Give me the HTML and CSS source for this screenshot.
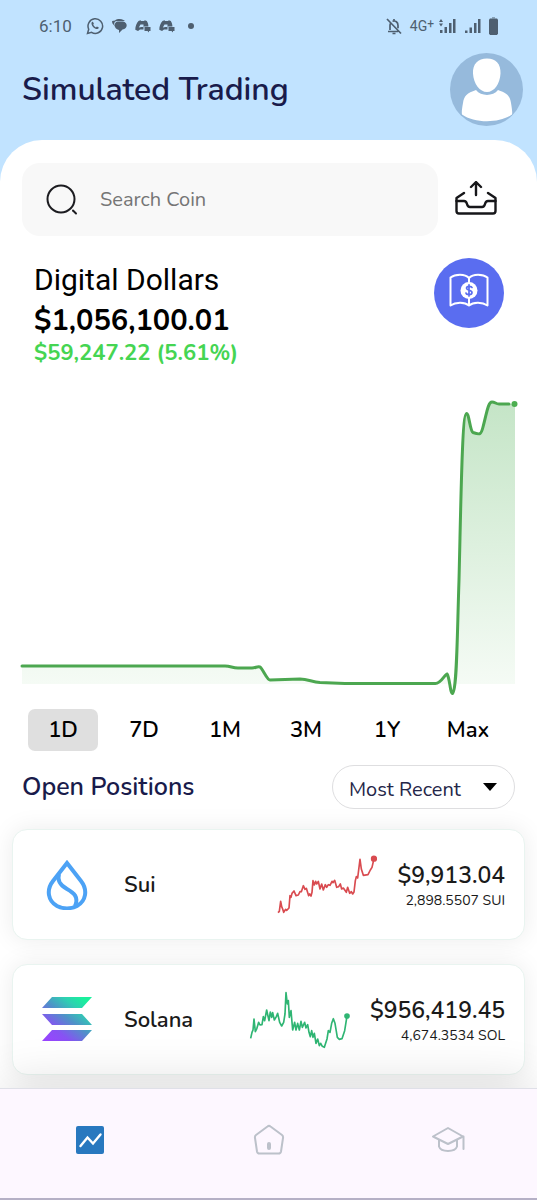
FILE: index.html
```html
<!DOCTYPE html>
<html lang="en">
<head>
<meta charset="utf-8">
<meta name="viewport" content="width=device-width, initial-scale=1">
<title>Simulated Trading</title>
<link rel="stylesheet" href="styles.css">
</head>
<body>
<div class="app">
  <div class="status">
    <div class="status-group">
      <span class="clock">6:10</span>
      <svg class="status-icon" viewBox="0 0 18 18" width="18" height="18" fill="none" stroke="currentColor" stroke-width="1.5"><path d="M1.5 16.5l1.2-4.3A7.3 7.3 0 1 1 5.6 15.400z"/><path d="M5.800 5.300c.6-.7 1.200-.5 1.500.2l.6 1.300-.7 1c.6 1.200 1.500 2 2.700 2.600l1-1 1.600.8c.4.3.2 1.100-.5 1.600-1.200.8-3.200-.1-4.700-1.600-1.500-1.500-2.400-3.700-1.500-4.900z" fill="currentColor" stroke="none"/></svg>
      <svg class="status-icon" viewBox="0 0 15 14" width="15" height="14" fill="currentColor"><path d="M3 1.500C5-.2 9-.4 11.500 1L13 2H5C3 2 2 3.500 2.200 5.500L3 7.500.5 4.500C0 3.500 0 2.500.2 2z"/><path d="M5.500 2.600h5.500c5 1 5 7-.5 8L7 14v-3C2 10 1 4 5.500 2.600z"/></svg>
      <svg class="status-icon" viewBox="0 0 16 13" width="16" height="13"><path d="M3.500 1l2-.8.6.8h3l.7-.8 2 .8c1 1.500 1.600 3.500 1.600 5.500H8.500v3H5L3 11 .3 9.700C.2 6.500 1.500 3 3.500 1z" fill="currentColor"/><path d="M3.800 7.500L5.500 4.500h3v2.500H6.500z" fill="#c1e3ff"/><path d="M9.500 7h6V11H14v1.500L12.500 11h-3z" fill="currentColor"/></svg>
      <svg class="status-icon" viewBox="0 0 16 13" width="16" height="13"><path d="M3.500 1l2-.8.6.8h3l.7-.8 2 .8c1 1.500 1.600 3.500 1.600 5.500H8.500v3H5L3 11 .3 9.700C.2 6.500 1.500 3 3.500 1z" fill="currentColor"/><path d="M3.800 7.500L5.500 4.500h3v2.500H6.500z" fill="#c1e3ff"/><path d="M9.500 7h6V11H14v1.500L12.500 11h-3z" fill="currentColor"/></svg>
      <svg class="status-icon" viewBox="0 0 16 6" width="16" height="6"><circle cx="8" cy="3" r="3" fill="currentColor"/></svg>
    </div>
    <div class="status-group status-right">
      <svg viewBox="0 0 16 17" width="16" height="17" fill="none" stroke="currentColor" stroke-width="1.700"><path d="M1 1l14 14.500M2 13.500h10M4 12V7.500c0-1 .2-2 .8-2.700M6.500 3.300C9.500 2.200 12 4.300 12 7.500v2.700M8 1v2M6.500 15.500h3"/></svg>
      <span class="network">4G<sup>+</sup></span>
      <svg viewBox="0 0 17 16" width="17" height="16" fill="currentColor"><path d="M0 4l2-3 2 3zM0 5.500h4l-2 3zM1 12h2.500v3H1zM5.500 9H8v6H5.500zM10 5h2.500v10H10zM14 1h2.500v14H14z"/></svg>
      <svg viewBox="0 0 17 16" width="17" height="16" fill="currentColor"><path d="M1 12.500h2.500V15H1zM5.500 9.500H8V15H5.500zM10 5h2.500v10H10zM14 1h2.500v14H14z"/></svg>
      <svg viewBox="0 0 9 18" width="9" height="18" fill="currentColor"><path d="M3 0h3v1.500H3z" opacity=".5"/><path d="M1 1.500h7l1 1v14L8 18H1l-1-1.500v-14z"/></svg>
    </div>
  </div>

  <header class="header">
    <h1 class="title">Simulated Trading</h1>
    <button class="avatar" type="button" aria-label="Profile">
      <svg viewBox="0 0 73 73"><circle cx="36.500" cy="36.500" r="36.500" fill="#96badc"/><path d="M37 5.500c9 0 14 5.500 13.500 15C50 31 44 39 37 39s-13.500-8-14-18.500C22.500 11 28 5.500 37 5.500z" fill="#fff"/><path d="M26 37c5 6.500 17 6.500 22 0 9 3 12 6 13 13 1 6 1.500 10 1 11.500-12 9-38 9-50 0-.5-2 0-6 1-11.500 1-7 4-10 13-13z" fill="#fff"/></svg>
    </button>
  </header>

  <main class="panel">
    <div class="search-row">
      <label class="search">
        <svg viewBox="0 0 32 32" width="32" height="32" fill="none" stroke="#1c1c20" stroke-width="2" stroke-linecap="round"><circle cx="15" cy="15" r="13.500"/><path d="M27 26.500l3 3"/></svg>
        <input class="search-input" type="text" placeholder="Search Coin" aria-label="Search Coin">
      </label>
      <button class="icon-button" type="button" aria-label="Export">
        <svg viewBox="0 0 42 34" width="42" height="34" fill="none" stroke="#17171a" stroke-width="2.400" stroke-linecap="round" stroke-linejoin="round"><path d="M21 14V2M16 6l5-5 5 5M9 12l-7.500 5v13c0 1.500 1 2.500 2.500 2.500h34c1.500 0 2.500-1 2.500-2.500V17L33 12"/><path d="M1.500 20H9c2 0 2.500 1 3 3s1.500 3 3 3h12c1.500 0 2.500-1 3-3s1-3 3-3h7.500"/></svg>
      </button>
    </div>

    <section class="summary">
      <div class="balance">
        <h2 class="balance-label">Digital Dollars</h2>
        <p class="balance-value">$1,056,100.01</p>
        <p class="balance-change">$59,247.22 (5.61%)</p>
      </div>
      <button class="learn" type="button" aria-label="Money guide">
        <svg viewBox="0 0 70 70" fill="none" stroke="#fff" stroke-width="2" stroke-linecap="round" stroke-linejoin="round"><path d="M35 20c-4-4.500-14-4-18.500-.5V47.500c5-3.500 14-4 18.500 0 4.500-4 13.500-3.500 18.500 0V19.500C49 16 39 15.500 35 20v4M35 39v8"/><circle cx="35" cy="32.500" r="8.500" fill="#fff" stroke="none"/><path d="M38 29.500c-.5-1.500-5.500-2-5.500.8 0 2.400 5.500 1.500 5.500 4.200 0 2.800-5.500 2.500-6 .5M35 26.800V38" stroke="#5a6df0" stroke-width="1.700"/></svg>
      </button>
    </section>

    <svg class="chart" viewBox="22 395 493 300" role="img" aria-label="Balance over one day">
      <defs><linearGradient id="area" x1="0" y1="404" x2="0" y2="684" gradientUnits="userSpaceOnUse"><stop offset="0" stop-color="#c5e5c7"/><stop offset="1" stop-color="#f5fbf5"/></linearGradient></defs>
      <path fill="url(#area)" d="M22 684V666H225C231 666 232 668 238 668H252C256 668 257 666 260 667C263 669 267 680 270 680L300 679C308 679 312 682 320 682L345 684H438C441 684 445 674 447 674L450 684H456C458 640 458 610 459 580C461 500 462 413 466 413C469 413 470 432 473 432C480 435 481 435 483 427C487 412 488 402 492 402C495 402 496 404 499 404H515V684z"/>
      <path class="chart-line" d="M22 666H225C231 666 232 668 238 668H252C256 668 257 666 260 667C263 669 267 680 270 680L300 679C308 679 312 682 320 682.500L345 683.500H435C441 684 445 674 447 674C450 678 450 693.500 452.500 693.500C457 690 457 640 459 580C461 500 462 413.500 466.500 413.500C469 413 470 431 473 432.500C480 435 481 435 483 427C487 412 488 402 492 402C495 402 496 404 499 404H509"/>
      <circle cx="514.500" cy="404" r="3" fill="#4caf50"/>
    </svg>

    <div class="ranges" role="group" aria-label="Time range">
      <button class="range range-active" type="button" aria-pressed="true">1D</button>
      <button class="range" type="button">7D</button>
      <button class="range" type="button">1M</button>
      <button class="range" type="button">3M</button>
      <button class="range" type="button">1Y</button>
      <button class="range" type="button">Max</button>
    </div>

    <div class="positions-head">
      <h2 class="positions-title">Open Positions</h2>
      <div class="sort">
        <select class="sort-select" aria-label="Sort positions"><option>Most Recent</option></select>
        <svg class="sort-arrow" viewBox="0 0 14 8" width="14" height="8"><path d="M0 0h14L7 8z"/></svg>
      </div>
    </div>

    <ul class="positions">
      <li class="card">
        <svg class="coin" viewBox="0 0 50 50" fill="none" stroke="#4ca2f5" stroke-width="4"><path d="M25 3L11 21C4 30 6 41 15 46c6 3 14 3 20 0 9-5 11-16 4-25z"/><path d="M17 14c-2 7 1 11 8 15s12 8 8 17"/></svg>
        <h3 class="coin-name">Sui</h3>
        <svg class="spark" viewBox="105 40 306 186" stroke="#d94b50"><path d="M114 216L118 212 122 182 125 198 128 205 131 215 137 206 140 209 147 202 150 165 153 170 156 158 162 151 168 165 175 163 180 153 184 153 190 135 195 146 199 143 206 165 209 160 213 166 216 155 219 120 223 133 227 122 230 130 235 122 240 145 245 130 250 148 256 132 260 140 265 132 270 134 276 122 279 126 284 119 290 140 296 138 301 130 305 145 310 142 319 155 323 140 329 158 334 153 338 160 342 154 346 120 349 108 353 112 360 56 364 85 370 104 384 102 391 88 396 80 402 54"/><circle cx="402" cy="54" r="7" fill="#d94b50"/></svg>
        <div class="holding"><span class="holding-value">$9,913.04</span><span class="holding-amount">2,898.5507 SUI</span></div>
      </li>
      <li class="card">
        <svg class="coin" viewBox="0 0 50 50"><defs><linearGradient id="sol" x1="8" y1="48" x2="42" y2="4" gradientUnits="userSpaceOnUse"><stop offset="0" stop-color="#9945ff"/><stop offset=".25" stop-color="#8752f3"/><stop offset=".55" stop-color="#4f92c8"/><stop offset=".8" stop-color="#2ed0b2"/><stop offset="1" stop-color="#19f09c"/></linearGradient></defs><path fill="url(#sol)" d="M10 2h40l-10 11H0zM0 19h40l10 11H10zM10 35h40L40 46H0z"/></svg>
        <h3 class="coin-name">Solana</h3>
        <svg class="spark" viewBox="52 55 306 186" stroke="#2fb573"><path d="M60 203L64 185 67 178 70 145 74 183 78 175 84 155 88 163 94 162 98 138 102 150 108 118 115 150 119 124 123 140 126 126 131 148 137 138 141 128 147 155 153 166 159 155 163 130 166 66 170 100 173 90 176 140 181 120 186 178 192 155 196 178 201 158 206 178 211 152 215 170 222 155 226 172 231 162 235 185 239 198 243 180 247 200 251 188 256 218 261 205 266 225 270 218 275 227 281 230 289 205 293 180 298 185 303 158 308 144 313 158 320 200 326 206 334 204 342 180 349 136"/><circle cx="349" cy="136" r="6" fill="#2fb573"/></svg>
        <div class="holding"><span class="holding-value">$956,419.45</span><span class="holding-amount">4,674.3534 SOL</span></div>
      </li>
    </ul>
  </main>

  <nav class="nav" aria-label="Main">
    <a class="nav-link" href="#trading" aria-label="Trading" aria-current="page"><svg viewBox="0 0 36 36" width="36" height="36"><rect x="4" y="4" width="28" height="28" rx="2" fill="#2878bf"/><path d="M8.500 24l7-8.500 5.500 6 7.500-9" fill="none" stroke="#fff" stroke-width="2.400" stroke-linecap="round"/></svg></a>
    <a class="nav-link" href="#home" aria-label="Home"><svg viewBox="0 0 36 36" width="36" height="36" fill="none" stroke="#bcc1ca" stroke-width="2" stroke-linejoin="round"><path d="M16.500 4.500L5 13c-1 .8-1.200 2-1 3l2 13.500c.3 1.500 1 2 2.500 2h19c1.500 0 2.200-.5 2.500-2L32 16c.2-1 0-2.200-1-3L19.500 4.500c-1-.8-2-.8-3 0z"/><rect x="17" y="21" width="2" height="6" rx="1" fill="#bcc1ca"/></svg></a>
    <a class="nav-link" href="#learn" aria-label="Learn"><svg viewBox="0 0 36 36" width="36" height="36" fill="none" stroke="#bcc1ca" stroke-width="2" stroke-linejoin="round" stroke-linecap="round"><path d="M3 14.500L18 6l15 8.500L18 22z"/><path d="M9 18v6.500c2 6 16 6 18 0V18M33.500 14.500V27"/></svg></a>
  </nav>
</div>
</body>
</html>
```

FILE: styles.css
```css
* {
  box-sizing: border-box;
}

body {
  margin: 0;
  font-family: Nunito, Lato, sans-serif;
  color: #000;
  background: #fff;
}

h1, h2, h3, p, ul {
  margin: 0;
  padding: 0;
}

button {
  padding: 0;
  border: 0;
  background: none;
  font: inherit;
  color: inherit;
}

svg {
  display: block;
  flex: none;
}

.app {
  display: flex;
  flex-direction: column;
  min-height: 100vh;
  background: #c1e3ff;
}

.status {
  display: flex;
  justify-content: space-between;
  align-items: center;
  height: 52px;
  padding: 0 39px;
  color: #4e5f70;
  font-family: Roboto, sans-serif;
}

.status-group {
  display: flex;
  align-items: center;
  gap: 8px;
}

.clock {
  margin-right: 6px;
  font-size: 17px;
}

.network {
  font-size: 14px;
}

.network sup {
  font-size: 12px;
  line-height: 1;
  vertical-align: 3px;
}

.status-right .network {
  margin-right: -3px;
}

.header {
  display: flex;
  justify-content: space-between;
  align-items: center;
  padding: 1px 14px 14px 22px;
}

.title {
  padding-top: 1px;
  font-size: 32px;
  font-weight: 600;
  line-height: 40px;
  color: #191b4b;
}

.avatar {
  width: 73px;
  height: 73px;
}

.panel {
  flex: 1;
  padding: 23px 0 13px;
  border-radius: 42px 42px 0 0;
  background: #fff;
}

.search-row {
  display: flex;
  align-items: center;
  gap: 17px;
  padding: 0 40px 0 22px;
}

.icon-button {
  padding-bottom: 4px;
}

.search {
  display: flex;
  flex: 1;
  align-items: center;
  gap: 22px;
  height: 73px;
  padding: 0 24px;
  border-radius: 18px;
  background: #f8f8f8;
}

.search-input {
  flex: 1;
  min-width: 0;
  padding: 0;
  border: 0;
  outline: 0;
  background: none;
  font: inherit;
  font-size: 20px;
}

.search-input::placeholder {
  color: #757575;
  opacity: 1;
}

.summary {
  display: flex;
  justify-content: space-between;
  align-items: flex-start;
  padding: 22px 33px 0 34px;
}

.balance {
  padding-top: 2px;
}

.balance-label {
  font-family: Roboto, sans-serif;
  font-size: 30px;
  font-weight: 400;
  line-height: 40px;
}

.balance-value {
  padding-top: 1px;
  font-size: 29px;
  font-weight: 700;
  line-height: 40px;
}

.balance-change {
  font-size: 22px;
  font-weight: 700;
  line-height: 24px;
  color: #45d552;
}

.learn {
  width: 70px;
  height: 70px;
  border-radius: 50%;
  background: #5a6df0;
}

.chart {
  width: calc(100% - 44px);
  margin: 30px 22px 0;
  overflow: visible;
}

.chart-line {
  fill: none;
  stroke: #4ca750;
  stroke-width: 3;
  stroke-linecap: round;
}

.ranges {
  display: grid;
  grid-template-columns: repeat(6, 1fr);
  gap: 11px;
  padding: 14px 34px 0 28px;
}

.range {
  height: 42px;
  border-radius: 7px;
  font-size: 22px;
  font-weight: 600;
}

.range-active {
  background: #dfdfdf;
}

.positions-head {
  display: flex;
  justify-content: space-between;
  align-items: center;
  padding: 14px 22px 0;
}

.positions-title {
  font-size: 25px;
  font-weight: 600;
  color: #191b4b;
}

.sort {
  display: grid;
  align-items: center;
  width: 183px;
}

.sort-select,
.sort-arrow {
  grid-area: 1 / 1;
}

.sort-select {
  appearance: none;
  width: 100%;
  height: 44px;
  padding: 5px 40px 0 16px;
  border: 1px solid #dedee0;
  border-radius: 22px;
  background: #fff;
  font: inherit;
  font-size: 20px;
  color: #242648;
}

.sort-arrow {
  justify-self: end;
  margin-right: 18px;
  pointer-events: none;
}

.positions {
  display: grid;
  gap: 24px;
  padding: 20px 12px 0;
  list-style: none;
}

.card {
  display: flex;
  align-items: center;
  height: 111px;
  padding: 0 19px 0 29px;
  border: 1px solid #e9f4f0;
  border-radius: 15px;
  background: #fff;
  box-shadow: 0 0 24px rgba(0, 0, 0, 0.08);
}

.coin {
  width: 50px;
  height: 50px;
}

.coin-name {
  flex: 1;
  margin-left: 32px;
  font-size: 22px;
  font-weight: 600;
  color: #1a1a1a;
}

.spark {
  width: 102px;
  height: 62px;
  margin-right: 20px;
  fill: none;
  stroke-width: 5;
  stroke-linejoin: round;
}

.holding {
  display: grid;
  justify-items: end;
  padding-top: 2px;
  color: #1a1a1a;
}

.holding-value {
  font-size: 23px;
  font-weight: 600;
  line-height: 30px;
}

.holding-amount {
  font-size: 14px;
  line-height: 20px;
}

.nav {
  position: relative;
  display: grid;
  grid-template-columns: repeat(3, 1fr);
  align-items: center;
  height: 112px;
  padding-bottom: 8px;
  border-top: 1px solid #dfe0e8;
  border-bottom: 2px solid #b5b0c6;
  background: #fdf7ff;
  box-shadow: 0 -8px 50px -4px rgba(0, 0, 0, 0.14);
}

.nav-link {
  display: grid;
  justify-items: center;
}
```
